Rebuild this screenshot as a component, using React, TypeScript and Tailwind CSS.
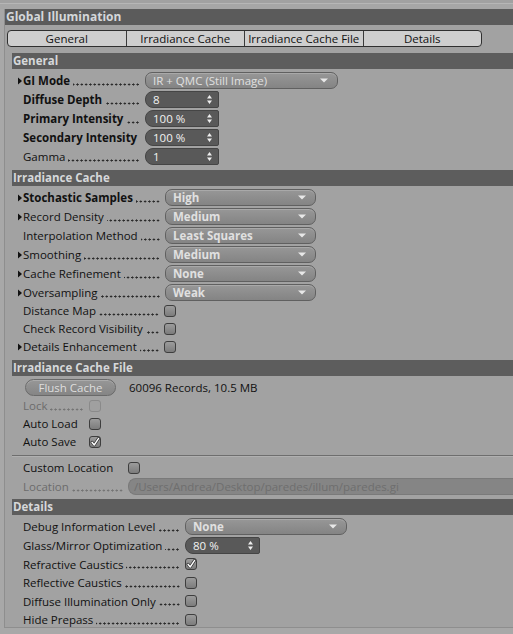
import React from "react";

type Kind = "select" | "num" | "check" | "none";

function Arrow() {
  return (
    <svg width="6" height="8" viewBox="0 0 6 8" className="shrink-0">
      <path d="M1 0.5 L5 4 L1 7.5 Z" fill="#111" />
    </svg>
  );
}

function Dots({ muted }: { muted?: boolean }) {
  return (
    <span
      className={`mb-[1px] ml-[3px] h-[3px] min-w-0 flex-1 self-end bg-right bg-repeat-x bg-[length:4.3px_3px] ${
        muted
          ? "bg-[radial-gradient(circle_at_center,#747474_0.85px,transparent_1.3px)]"
          : "bg-[radial-gradient(circle_at_center,#2a2a2a_0.85px,transparent_1.3px)]"
      }`}
    />
  );
}

function Label({
  text,
  w,
  bold,
  arrow,
  dots = true,
  muted,
}: {
  text: string;
  w: string;
  bold?: boolean;
  arrow?: boolean;
  dots?: boolean;
  muted?: boolean;
}) {
  return (
    <div className={`${w} flex h-[12px] shrink-0 items-center pr-[5px]`}>
      <span className="flex w-[6px] shrink-0 items-center">{arrow && <Arrow />}</span>
      <span
        className={`shrink-0 whitespace-nowrap ${bold ? "font-bold" : ""} ${muted ? "text-[#6c6c6c]" : "text-[#111]"}`}
      >
        {text}
      </span>
      {dots && <Dots muted={muted} />}
    </div>
  );
}

function Select({ value, w, bold = true }: { value: string; w: string; bold?: boolean }) {
  return (
    <div
      className={`${w} flex h-[17px] items-center rounded-[7px] border border-[#606060] bg-gradient-to-b from-[#979797] to-[#848484] pl-[7px] text-[#e0e0e0] shadow-[inset_0_1px_0_rgba(255,255,255,0.18)] ${bold ? "font-bold" : ""}`}
    >
      <span className="whitespace-nowrap">{value}</span>
      <svg width="8" height="5" viewBox="0 0 8 5" className="ml-auto mr-[9px]">
        <path d="M0 0.5 H8 L4 4.5 Z" fill="#e8e8e8" />
      </svg>
    </div>
  );
}

function Num({ value, w }: { value: string; w: string }) {
  return (
    <div
      className={`${w} flex h-[17px] items-center rounded-l-[8px] rounded-r-[2px] border border-[#454545] bg-[#595959] pl-[7px] text-[#f2f2f2]`}
    >
      <span className="whitespace-nowrap">{value}</span>
      <svg width="5" height="9" viewBox="0 0 5 9" className="ml-auto mr-[6px]">
        <path d="M2.5 0 L5 3.5 H0 Z M2.5 9 L0 5.5 H5 Z" fill="#eeeeee" />
      </svg>
    </div>
  );
}

function Check({ checked, disabled }: { checked?: boolean; disabled?: boolean }) {
  return (
    <div
      className={`flex h-[12px] w-[12px] shrink-0 items-center justify-center rounded-[3px] border ${
        disabled
          ? "border-[#8a8a8a] bg-[#a0a0a0]"
          : "border-[#3e3e3e] bg-gradient-to-b from-[#9c9c9c] to-[#7c7c7c]"
      }`}
    >
      {checked && (
        <svg width="10" height="10" viewBox="0 0 10 10">
          <path d="M2 5.2 L4.2 8 L8.6 1.4" stroke="#2e2e2e" strokeWidth="2.8" fill="none" strokeLinecap="round" strokeLinejoin="round" />
          <path d="M2 5.2 L4.2 8 L8.6 1.4" stroke="#ffffff" strokeWidth="1.4" fill="none" strokeLinecap="round" strokeLinejoin="round" />
        </svg>
      )}
    </div>
  );
}

type RowDef = {
  label: string;
  bold?: boolean;
  arrow?: boolean;
  dots?: boolean;
  muted?: boolean;
  kind: Kind;
  value?: string;
  checked?: boolean;
  plain?: boolean;
  h?: string;
};

function Row({ r, lw, fw }: { r: RowDef; lw: string; fw: string }) {
  return (
    <div className={`flex ${r.h ?? "h-[19px]"} items-center pl-[12px]`}>
      <Label text={r.label} w={lw} bold={r.bold} arrow={r.arrow} dots={r.dots} muted={r.muted} />
      {r.kind === "select" && <Select value={r.value ?? ""} w={fw} bold={!r.plain} />}
      {r.kind === "num" && <Num value={r.value ?? ""} w={fw} />}
      {r.kind === "check" && <Check checked={r.checked} disabled={r.muted} />}
    </div>
  );
}

function Header({ title }: { title: string }) {
  return (
    <div className="ml-[7px] flex h-[16px] items-center bg-[#5d5d5d] pl-[1px] font-bold text-[#d6d8da]">
      {title}
    </div>
  );
}

const tabs = ["General", "Irradiance Cache", "Irradiance Cache File", "Details"];

const general: RowDef[] = [
  { label: "GI Mode", bold: true, arrow: true, kind: "select", value: "IR + QMC (Still Image)", plain: true },
];

const generalNums: RowDef[] = [
  { label: "Diffuse Depth", bold: true, kind: "num", value: "8" },
  { label: "Primary Intensity", bold: true, kind: "num", value: "100 %" },
  { label: "Secondary Intensity", bold: true, kind: "num", value: "100 %", dots: false },
  { label: "Gamma", kind: "num", value: "1" },
];

const cacheSelects: RowDef[] = [
  { label: "Stochastic Samples", bold: true, arrow: true, kind: "select", value: "High" },
  { label: "Record Density", arrow: true, kind: "select", value: "Medium" },
  { label: "Interpolation Method", kind: "select", value: "Least Squares" },
  { label: "Smoothing", arrow: true, kind: "select", value: "Medium" },
  { label: "Cache Refinement", arrow: true, kind: "select", value: "None" },
  { label: "Oversampling", arrow: true, kind: "select", value: "Weak" },
];

const cacheChecks: RowDef[] = [
  { label: "Distance Map", kind: "check", h: "h-[18px]" },
  { label: "Check Record Visibility", kind: "check", h: "h-[18px]" },
  { label: "Details Enhancement", arrow: true, kind: "check", h: "h-[18px]" },
];

const fileChecks: RowDef[] = [
  { label: "Lock", kind: "check", muted: true, h: "h-[18px]" },
  { label: "Auto Load", kind: "check", dots: false, h: "h-[18px]" },
  { label: "Auto Save", kind: "check", dots: false, checked: true, h: "h-[18px]" },
];

const detailChecks: RowDef[] = [
  { label: "Refractive Caustics", kind: "check", checked: true, h: "h-[18.5px]" },
  { label: "Reflective Caustics", kind: "check", h: "h-[18.5px]" },
  { label: "Diffuse Illumination Only", kind: "check", h: "h-[18.5px]" },
  { label: "Hide Prepass", kind: "check", h: "h-[18.5px]" },
];

export default function App() {
  return (
    <div className="h-[634px] w-[513px] overflow-hidden bg-[#a8a8a8] text-[11.5px] leading-none [font-family:'Open_Sans',sans-serif]">
      <div className="h-[3px] bg-[#a1a1a1]" />
      <div className="h-[1px] bg-[#b6b6b6]" />
      <div className="h-[5px] bg-[#a6a6a6]" />
      <div className="ml-[4px] h-[619px] border-b border-l border-[#8e8e8e] bg-[#a2a2a2]">
        <div className="flex h-[16px] items-center bg-[#5b5b5b] pl-[1px] text-[12px] font-bold text-[#d4d7da]">
          Global Illumination
        </div>

        <div className="ml-[2px] mt-[5px] flex h-[17px] w-[475px] overflow-hidden rounded-[4px] border border-[#2f2f2f] bg-[#cecece]">
          {tabs.map((t, i) => (
            <div
              key={t}
              className={`flex flex-1 items-center justify-center text-[#111] ${i > 0 ? "border-l border-[#3a3a3a]" : ""}`}
            >
              {t}
            </div>
          ))}
        </div>

        <div className="mt-[6px]">
          <Header title="General" />
          <div className="pb-[4px] pt-[2px]">
            {general.map((r) => (
              <Row key={r.label} r={r} lw="w-[128px]" fw="w-[193px]" />
            ))}
            {generalNums.map((r) => (
              <Row key={r.label} r={r} lw="w-[128px]" fw="w-[74px]" />
            ))}
          </div>
        </div>

        <div>
          <Header title="Irradiance Cache" />
          <div className="pb-[4px] pt-[2px]">
            {cacheSelects.map((r) => (
              <Row key={r.label} r={r} lw="w-[148px]" fw="w-[151px]" />
            ))}
            {cacheChecks.map((r) => (
              <Row key={r.label} r={r} lw="w-[147px]" fw="" />
            ))}
          </div>
        </div>

        <div>
          <Header title="Irradiance Cache File" />
          <div className="pt-[2px]">
            <div className="flex h-[19px] items-center pl-[20px]">
              <div className="flex h-[17px] w-[91px] items-center justify-center rounded-full border border-[#6a6a6a] bg-gradient-to-b from-[#979797] to-[#858585] text-[#dedede] shadow-[inset_0_1px_0_rgba(255,255,255,0.2)]">
                Flush Cache
              </div>
              <span className="ml-[13px] text-[#111]">60096 Records, 10.5 MB</span>
            </div>
            {fileChecks.map((r) => (
              <Row key={r.label} r={r} lw="w-[72px]" fw="" />
            ))}
            <div className="ml-[7px] mt-[4px] h-[2px] border-b border-t border-b-[#b0b0b0] border-t-[#6e6e6e]" />
            <div className="mt-[2px]">
              <Row r={{ label: "Custom Location", kind: "check", dots: false, h: "h-[18px]" }} lw="w-[111px]" fw="" />
              <div className="flex h-[19px] items-center pl-[12px]">
                <Label text="Location" w="w-[111px]" muted />
                <div className="flex h-[17px] flex-1 items-center rounded-l-[8px] border border-r-0 border-[#7a7a7a] bg-[#858585] pl-[5px] text-[#6e6e6e]">
                  /Users/Andrea/Desktop/paredes/illum/paredes.gi
                </div>
              </div>
            </div>
          </div>
        </div>

        <div className="mt-[3px]">
          <Header title="Details" />
          <div className="pt-[2px]">
            <Row r={{ label: "Debug Information Level", kind: "select", value: "None" }} lw="w-[168px]" fw="w-[162px]" />
            <Row r={{ label: "Glass/Mirror Optimization", kind: "num", value: "80 %" }} lw="w-[168px]" fw="w-[75px]" />
            {detailChecks.map((r) => (
              <Row key={r.label} r={r} lw="w-[168px]" fw="" />
            ))}
          </div>
        </div>
      </div>
    </div>
  );
}
